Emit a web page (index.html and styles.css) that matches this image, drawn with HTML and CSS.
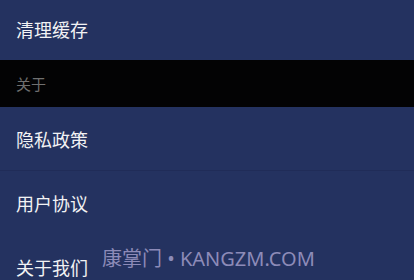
FILE: index.html
```html
<!DOCTYPE html>
<html lang="zh">
<head>
<meta charset="utf-8">
<link rel="stylesheet" href="styles.css">
</head>
<body>
<div class="page">
  <div class="row first">清理缓存</div>
  <div class="section">关于</div>
  <div class="row sep">隐私政策</div>
  <div class="row">用户协议</div>
  <div class="row">关于我们</div>
  <div class="watermark">康掌门 • KANGZM.COM</div>
</div>
</body>
</html>
```
FILE: styles.css
```css
html, body {
  margin: 0;
  padding: 0;
  background: #243260;
}
.page {
  position: relative;
  width: 414px;
  height: 280px;
  overflow: hidden;
  font-family: "Noto Sans", "Noto Sans CJK SC", sans-serif;
}
.row {
  display: flex;
  align-items: center;
  height: 64px;
  padding-left: 16px;
  font-size: 18px;
  color: #f2f2f4;
  box-sizing: border-box;
}
.row.first {
  height: 60px;
  padding-bottom: 2px;
}
.row.sep {
  border-bottom: 1px solid #202c58;
}
.section {
  display: flex;
  align-items: center;
  height: 47px;
  padding-left: 16px;
  background: #030304;
  color: #707070;
  font-size: 15px;
  box-sizing: border-box;
}
.watermark {
  position: absolute;
  left: 102px;
  top: 243px;
  font-size: 20px;
  color: #8d8bb8;
  white-space: nowrap;
}
```
